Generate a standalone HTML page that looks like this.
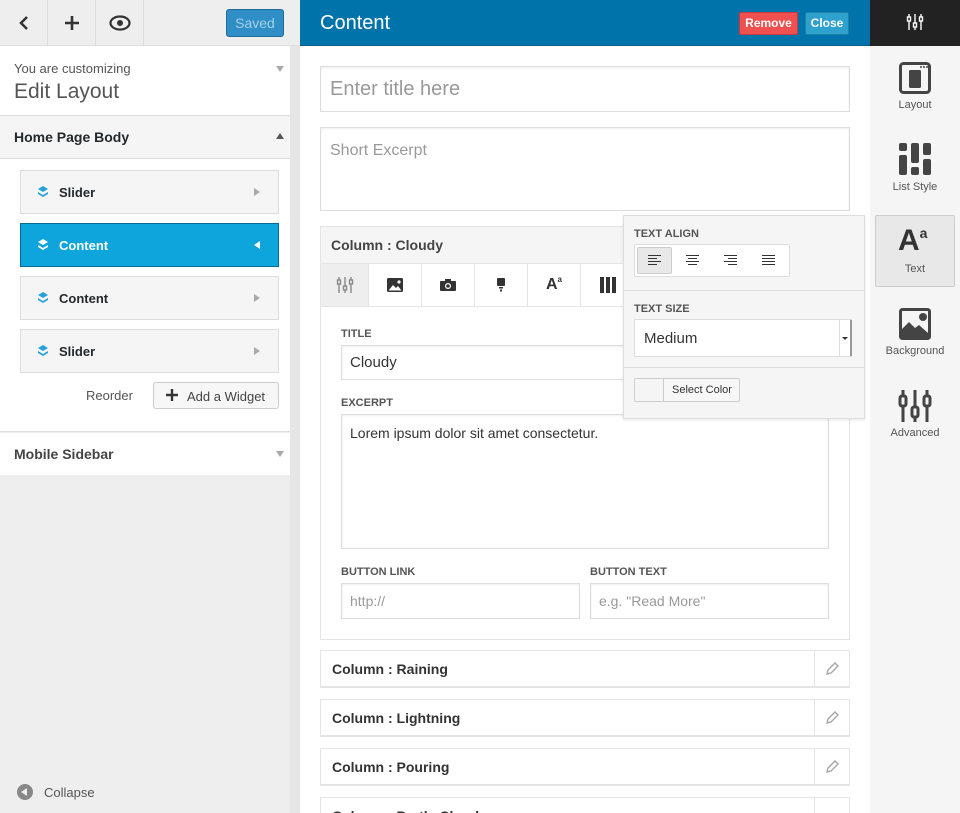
<!DOCTYPE html>
<html style="overflow:hidden;height:813px"><head><meta charset="utf-8"><style>
*{box-sizing:border-box;margin:0;padding:0}
body{width:960px;height:813px;overflow:hidden;font-family:"Liberation Sans",sans-serif;background:#fff;position:relative;color:#333}
.abs{position:absolute}
.left{left:0;top:0;width:300px;height:813px;background:#eee}
.topbar{left:0;top:0;width:300px;height:46px;background:#eee;border-bottom:1px solid #ddd}
.tb{top:0;height:45px;width:48px;border-right:1px solid #ddd;display:flex;align-items:center;justify-content:center}
.w{background:#fff}
.item{position:absolute;left:20px;width:259px;height:44px;background:#f5f5f5;border:1px solid #ddd;font-size:13px;font-weight:bold;color:#23282d;display:flex;align-items:center;padding-left:38px}
.item .ic{position:absolute;left:16px;top:15px}
.item .ar{position:absolute;right:18px;top:17px;width:0;height:0;border-left:6px solid #aaa;border-top:4px solid transparent;border-bottom:4px solid transparent}
.inp{position:absolute;background:#fff;border:1px solid #ddd;box-shadow:inset 0 1px 2px rgba(0,0,0,.07)}
.lbl{position:absolute;font-size:11px;font-weight:bold;color:#555}
.col{position:absolute;left:320px;width:530px;height:38px;background:#fff;border:1px solid #e5e5e5;border-bottom:2px solid #e5e5e5;font-size:14px;font-weight:bold;color:#333;padding:10px 0 0 11px;overflow:hidden}
.col .pen{position:absolute;right:0;top:0;width:35px;height:36px;border-left:1px solid #e5e5e5;display:flex;align-items:center;justify-content:center}
.tab{position:absolute;top:264px;height:42px;width:53px;border-right:1px solid #e5e5e5;display:flex;align-items:center;justify-content:center}
.side{position:absolute;left:875px;width:80px;text-align:center;font-size:11px;color:#555}
</style></head><body>
<div class="abs left"></div>
<div class="abs" style="left:290px;top:46px;width:10px;height:767px;background:#e6e6e6"></div>
<div class="abs topbar"></div>
<div class="abs tb" style="left:0"><svg width="14" height="16"><path d="M10 2L4 8l6 6" stroke="#333" stroke-width="2.5" fill="none"/></svg></div>
<div class="abs tb" style="left:48px"><svg width="16" height="16"><path d="M8 1v14M1 8h14" stroke="#333" stroke-width="2.6"/></svg></div>
<div class="abs tb" style="left:96px"><svg width="22" height="16"><ellipse cx="11" cy="8" rx="9.5" ry="6.5" fill="none" stroke="#333" stroke-width="2.2"/><circle cx="11" cy="8" r="3" fill="#333"/></svg></div>
<div class="abs" style="left:226px;top:9px;width:58px;height:28px;background:#2e8ec5;border:1px solid #1f6d9b;border-radius:3px;color:#a7d0ea;font-size:14px;text-align:center;line-height:26px">Saved</div>
<div class="abs w" style="left:0;top:46px;width:290px;height:70px;border-bottom:1px solid #ddd"></div>
<div class="abs" style="left:14px;top:61px;font-size:13px;color:#555">You are customizing</div>
<div class="abs" style="left:14px;top:80px;font-size:21px;color:#555">Edit Layout</div>
<div class="abs" style="left:276px;top:66px;border-top:6px solid #aaa;border-left:4px solid transparent;border-right:4px solid transparent"></div>
<div class="abs" style="left:0;top:116px;width:290px;height:43px;background:#f5f5f5;border-bottom:1px solid #ddd"></div>
<div class="abs" style="left:14px;top:129px;font-size:14px;font-weight:bold;color:#23282d">Home Page Body</div>
<div class="abs" style="left:276px;top:133px;border-bottom:6px solid #555;border-left:4px solid transparent;border-right:4px solid transparent"></div>
<div class="abs w" style="left:0;top:159px;width:290px;height:273px;border-bottom:1px solid #ddd"></div>
<div class="item" style="top:170px"><svg class="ic" width="12" height="12"><path d="M6 0L11 3 6 6 1 3z M1 6l5 3 5-3 0 2-5 3-5-3z" fill="#26a1d9"/></svg>Slider<span class="ar"></span></div>
<div class="item" style="top:223px;background:#0ea5dd;border-color:#0d6a94;color:#fff"><svg class="ic" width="12" height="12"><path d="M6 0L11 3 6 6 1 3z M1 6l5 3 5-3 0 2-5 3-5-3z" fill="#fff"/></svg>Content<span class="ar" style="border-left:0;border-right:6px solid #fff"></span></div>
<div class="item" style="top:276px"><svg class="ic" width="12" height="12"><path d="M6 0L11 3 6 6 1 3z M1 6l5 3 5-3 0 2-5 3-5-3z" fill="#26a1d9"/></svg>Content<span class="ar"></span></div>
<div class="item" style="top:329px"><svg class="ic" width="12" height="12"><path d="M6 0L11 3 6 6 1 3z M1 6l5 3 5-3 0 2-5 3-5-3z" fill="#26a1d9"/></svg>Slider<span class="ar"></span></div>
<div class="abs" style="left:86px;top:388px;font-size:13px;color:#555">Reorder</div>
<div class="abs" style="left:153px;top:382px;width:126px;height:27px;background:#f7f7f7;border:1px solid #ccc;border-radius:3px;font-size:13px;color:#444;padding:6px 0 0 33px">Add a Widget<svg class="abs" style="left:12px;top:6px" width="12" height="12"><path d="M6 0v12M0 6h12" stroke="#333" stroke-width="2.4"/></svg></div>
<div class="abs w" style="left:0;top:433px;width:290px;height:42px"></div>
<div class="abs" style="left:14px;top:446px;font-size:14px;font-weight:bold;color:#444">Mobile Sidebar</div>
<div class="abs" style="left:276px;top:451px;border-top:6px solid #aaa;border-left:4px solid transparent;border-right:4px solid transparent"></div>
<div class="abs" style="left:17px;top:784px;width:16px;height:16px;border-radius:50%;background:#888"></div>
<div class="abs" style="left:21px;top:788px;border-right:6px solid #eee;border-top:4px solid transparent;border-bottom:4px solid transparent"></div>
<div class="abs" style="left:44px;top:785px;font-size:13px;color:#555">Collapse</div>

<div class="abs" style="left:300px;top:0;width:570px;height:46px;background:#0073aa;border-bottom:1px solid #005a87"></div>
<div class="abs" style="left:320px;top:12px;font-size:20px;color:#fff">Content</div>
<div class="abs" style="left:739px;top:12px;width:59px;height:23px;background:#f05050;border:1px solid #c53c3c;border-radius:2px;color:#fff;font-size:12px;font-weight:bold;text-align:center;line-height:21px">Remove</div>
<div class="abs" style="left:805px;top:12px;width:44px;height:23px;background:#2ea2cc;border:1px solid #1e7fa8;border-radius:2px;color:#fff;font-size:12px;font-weight:bold;text-align:center;line-height:21px">Close</div>
<div class="inp" style="left:320px;top:66px;width:530px;height:46px;font-size:20px;color:#999;padding:11px 0 0 9px">Enter title here</div>
<div class="inp" style="left:320px;top:127px;width:530px;height:84px;font-size:16px;color:#999;padding:14px 0 0 9px">Short Excerpt</div>
<div class="abs" style="left:320px;top:226px;width:530px;height:414px;border:1px solid #e5e5e5;background:#fff"></div>
<div class="abs" style="left:321px;top:227px;width:528px;height:37px;background:#f5f5f5;border-bottom:1px solid #e5e5e5;font-size:14px;font-weight:bold;color:#444;padding:10px 0 0 10px">Column : Cloudy</div>
<div class="abs" style="left:321px;top:306px;width:528px;height:1px;background:#e5e5e5"></div>
<div class="tab" style="left:321px;width:48px;background:#eee"><svg width="18" height="18"><g stroke="#888" stroke-width="1.4" fill="none"><path d="M3 1v16M9 1v16M15 1v16"/><rect x="1.5" y="4" width="3" height="4" fill="#eee"/><rect x="7.5" y="10" width="3" height="4" fill="#eee"/><rect x="13.5" y="4" width="3" height="4" fill="#eee"/></g></svg></div>
<div class="tab" style="left:369px"><svg width="16" height="14"><rect width="16" height="14" rx="1.5" fill="#333"/><path d="M1.5 12.5L6 7l3 3 2-2 3.5 4.5z" fill="#fff"/><circle cx="12" cy="4" r="1.6" fill="#fff"/></svg></div>
<div class="tab" style="left:422px"><svg width="16" height="12"><rect y="2" width="16" height="10" rx="1" fill="#333"/><rect x="5" width="6" height="3" fill="#333"/><circle cx="8" cy="7" r="3" fill="#fff"/><circle cx="8" cy="7" r="1.8" fill="#333"/></svg></div>
<div class="tab" style="left:475px"><svg width="8" height="14"><rect width="8" height="8" rx="1" fill="#333"/><rect x="2" y="9" width="4" height="1.5" fill="#333"/><rect x="3" y="11.5" width="2" height="2" fill="#333"/></svg></div>
<div class="tab" style="left:528px;font-weight:bold;font-size:16px;color:#333">A<span style="font-size:8px;position:relative;top:-6px">a</span></div>
<div class="tab" style="left:581px;border-right:0"><svg width="16" height="16"><rect x="0" width="4" height="16" fill="#333"/><rect x="6" width="4" height="16" fill="#333"/><rect x="12" width="4" height="16" fill="#333"/></svg></div>
<div class="lbl" style="left:341px;top:328px">TITLE</div>
<div class="inp" style="left:341px;top:345px;width:290px;height:35px;font-size:15px;color:#333;padding:8px 0 0 8px">Cloudy</div>
<div class="lbl" style="left:341px;top:397px">EXCERPT</div>
<div class="inp" style="left:341px;top:414px;width:488px;height:135px;font-size:14px;color:#333;padding:10px 0 0 8px">Lorem ipsum dolor sit amet consectetur.</div>
<div class="lbl" style="left:341px;top:566px">BUTTON LINK</div>
<div class="lbl" style="left:590px;top:566px">BUTTON TEXT</div>
<div class="inp" style="left:341px;top:583px;width:239px;height:36px;font-size:14px;color:#999;padding:9px 0 0 8px">http://</div>
<div class="inp" style="left:590px;top:583px;width:239px;height:36px;font-size:14px;color:#999;padding:9px 0 0 8px">e.g. "Read More"</div>

<div class="abs" style="left:623px;top:215px;width:242px;height:204px;background:#f5f5f5;border:1px solid #ddd;box-shadow:0 1px 3px rgba(0,0,0,.1)"></div>
<div class="lbl" style="left:634px;top:228px">TEXT ALIGN</div>
<div class="abs" style="left:634px;top:244px;width:156px;height:33px;background:#fff;border:1px solid #ddd;border-radius:2px"></div>
<div class="abs" style="left:637px;top:247px;width:35px;height:27px;background:#e8e8e8;border:1px solid #ccc;border-radius:2px"></div>
<svg class="abs" style="left:648px;top:255px" width="130" height="10"><g stroke="#333" stroke-width="1"><path d="M0 .5h13M0 3.5h9M0 6.5h13M0 9.5h9"/><path d="M38 .5h13M40 3.5h9M38 6.5h13M40 9.5h9"/><path d="M76 .5h13M80 3.5h9M76 6.5h13M80 9.5h9"/><path d="M114 .5h13M114 3.5h13M114 6.5h13M114 9.5h13"/></g></svg>
<div class="abs" style="left:624px;top:290px;width:240px;height:1px;background:#ddd"></div>
<div class="lbl" style="left:634px;top:303px">TEXT SIZE</div>
<div class="abs" style="left:634px;top:319px;width:218px;height:38px;background:#fff;border:1px solid #ddd;font-size:15px;color:#333;padding:10px 0 0 9px">Medium</div>
<div class="abs" style="left:839px;top:320px;width:13px;height:36px;border-left:1px solid #ddd;border-right:2px solid #999"></div>
<div class="abs" style="left:842px;top:337px;border-top:3px solid #333;border-left:3px solid transparent;border-right:3px solid transparent"></div>
<div class="abs" style="left:624px;top:367px;width:240px;height:1px;background:#ddd"></div>
<div class="abs" style="left:634px;top:378px;width:106px;height:24px;background:#f7f7f7;border:1px solid #ccc;border-radius:2px"></div>
<div class="abs" style="left:635px;top:379px;width:29px;height:22px;background:#f5f5f5;border-right:1px solid #ccc"></div>
<div class="abs" style="left:672px;top:384px;font-size:11px;color:#333">Select Color</div>

<div class="col" style="top:650px">Column : Raining<div class="pen"><svg width="14" height="14"><path d="M2 12l1-4 7-7 3 3-7 7z" fill="none" stroke="#aaa" stroke-width="1.5"/></svg></div></div>
<div class="col" style="top:699px">Column : Lightning<div class="pen"><svg width="14" height="14"><path d="M2 12l1-4 7-7 3 3-7 7z" fill="none" stroke="#aaa" stroke-width="1.5"/></svg></div></div>
<div class="col" style="top:748px">Column : Pouring<div class="pen"><svg width="14" height="14"><path d="M2 12l1-4 7-7 3 3-7 7z" fill="none" stroke="#aaa" stroke-width="1.5"/></svg></div></div>
<div class="col" style="top:797px;height:16px;border-bottom:0">Column : Partly Cloudy<div class="pen" style="height:16px"></div></div>

<div class="abs" style="left:870px;top:0;width:90px;height:813px;background:#f5f5f5"></div>
<div class="abs" style="left:870px;top:0;width:90px;height:46px;background:#222"></div>
<svg class="abs" style="left:906px;top:13px" width="18" height="18"><g stroke="#fff" stroke-width="1.4" fill="none"><path d="M3 1v16M9 1v16M15 1v16"/><rect x="1.5" y="4" width="3" height="4" fill="#222"/><rect x="7.5" y="10" width="3" height="4" fill="#222"/><rect x="13.5" y="4" width="3" height="4" fill="#222"/></g></svg>
<svg class="abs" style="left:899px;top:62px" width="32" height="32"><rect x="1.5" y="1.5" width="29" height="29" rx="3" fill="none" stroke="#444" stroke-width="3"/><rect x="10" y="8" width="12" height="18" rx="1.5" fill="#444"/><circle cx="22" cy="5" r="1" fill="#444"/><circle cx="25" cy="5" r="1" fill="#444"/><circle cx="28" cy="5" r="1" fill="#444"/></svg>
<div class="side" style="top:99px">Layout</div>
<svg class="abs" style="left:899px;top:143px" width="32" height="32"><g fill="#444"><rect x="0" y="0" width="8" height="8" rx="2"/><rect x="0" y="12" width="8" height="20" rx="2"/><rect x="12" y="0" width="8" height="20" rx="2"/><rect x="12" y="24" width="8" height="8" rx="2"/><rect x="24" y="0" width="8" height="12" rx="2"/><rect x="24" y="16" width="8" height="16" rx="2"/></g></svg>
<div class="side" style="top:181px">List Style</div>
<div class="abs" style="left:875px;top:215px;width:80px;height:72px;background:#e8e8e8;border:1px solid #ccc;border-radius:2px"></div>
<div class="abs" style="left:898px;top:224px;font-size:30px;font-weight:bold;color:#333;line-height:34px">A<span style="font-size:14px;position:relative;top:-12px">a</span></div>
<div class="side" style="top:263px">Text</div>
<svg class="abs" style="left:899px;top:308px" width="32" height="32"><rect x="1.5" y="1.5" width="29" height="29" rx="2" fill="none" stroke="#444" stroke-width="3"/><path d="M3 29V21l7-7 6 6 4-3 9 8v4z" fill="#444"/><circle cx="24" cy="9" r="4" fill="#444"/></svg>
<div class="side" style="top:345px">Background</div>
<svg class="abs" style="left:898px;top:389px" width="34" height="34"><g stroke="#444" stroke-width="3" fill="none"><path d="M5 1v32M17 1v32M29 1v32"/><rect x="2" y="7" width="6" height="10" rx="2" fill="#f5f5f5"/><rect x="14" y="18" width="6" height="10" rx="2" fill="#f5f5f5"/><rect x="26" y="7" width="6" height="10" rx="2" fill="#f5f5f5"/></g></svg>
<div class="side" style="top:427px">Advanced</div>
</body></html>
